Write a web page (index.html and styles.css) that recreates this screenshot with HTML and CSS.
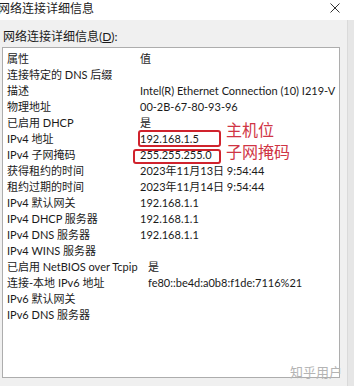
FILE: index.html
```html
<!DOCTYPE html>
<html lang="zh-CN">
<head>
<meta charset="utf-8">
<link rel="stylesheet" href="styles.css">
</head>
<body>
<div class="window">
  <div class="titlebar">
    <span class="title">网络连接详细信息</span>
    <svg class="close" width="10" height="10" viewBox="0 0 10 10"><path d="M0.5 0.5L9.5 9.5M9.5 0.5L0.5 9.5" stroke="#333" stroke-width="1"/></svg>
  </div>
  <div class="content">
    <div class="label">网络连接详细信息(<u>D</u>):</div>
    <div class="listbox">
      <div class="row head"><span class="k">属性</span><span class="v">值</span></div>
      <div class="row"><span class="k">连接特定的 DNS 后缀</span><span class="v"></span></div>
      <div class="row"><span class="k">描述</span><span class="v">Intel(R) Ethernet Connection (10) I219-V</span></div>
      <div class="row"><span class="k">物理地址</span><span class="v">00-2B-67-80-93-96</span></div>
      <div class="row"><span class="k">已启用 DHCP</span><span class="v">是</span></div>
      <div class="row"><span class="k">IPv4 地址</span><span class="v">192.168.1.5</span></div>
      <div class="row"><span class="k">IPv4 子网掩码</span><span class="v">255.255.255.0</span></div>
      <div class="row"><span class="k">获得租约的时间</span><span class="v">2023年11月13日 9:54:44</span></div>
      <div class="row"><span class="k">租约过期的时间</span><span class="v">2023年11月14日 9:54:44</span></div>
      <div class="row"><span class="k">IPv4 默认网关</span><span class="v">192.168.1.1</span></div>
      <div class="row"><span class="k">IPv4 DHCP 服务器</span><span class="v">192.168.1.1</span></div>
      <div class="row"><span class="k">IPv4 DNS 服务器</span><span class="v">192.168.1.1</span></div>
      <div class="row"><span class="k">IPv4 WINS 服务器</span><span class="v"></span></div>
      <div class="row"><span class="k">已启用 NetBIOS over Tcpip</span><span class="v shift">是</span></div>
      <div class="row"><span class="k">连接-本地 IPv6 地址</span><span class="v shift">fe80::be4d:a0b8:f1de:7116%21</span></div>
      <div class="row"><span class="k">IPv6 默认网关</span><span class="v"></span></div>
      <div class="row"><span class="k">IPv6 DNS 服务器</span><span class="v"></span></div>
      <div class="box box1"></div>
      <div class="box box2"></div>
      <div class="note note1">主机位</div>
      <div class="note note2">子网掩码</div>
      <div class="watermark">知乎用户</div>
    </div>
  </div>
  <div class="edge"></div>
</div>
</body>
</html>
```
FILE: styles.css
```css
html, body {
  margin: 0;
  padding: 0;
  width: 354px;
  height: 386px;
  overflow: hidden;
  background: #f0f0f0;
  font-family: Lato, "Noto Sans CJK SC", sans-serif;
  font-size: 11px;
  color: #1a1a1a;
}
.window {
  position: relative;
  width: 354px;
  height: 386px;
}
.titlebar {
  height: 20px;
  background: #fff;
  display: flex;
  align-items: center;
  justify-content: space-between;
  padding: 0 14px 0 0;
}
.title {
  margin-left: -2px;
  font-size: 12px;
  color: #222;
  line-height: 14px;
  margin-top: -3px;
}
.close {
  margin-top: -4px;
}
.content {
  padding: 10px 0 0 2px;
}
.label {
  padding-left: 1px;
  height: 17px;
  line-height: 14px;
  font-size: 12px;
}
.label u {
  text-decoration-thickness: 1px;
}
.listbox {
  position: relative;
  height: 331px;
  background: #fff;
  border: 1px solid #adadad;
  padding-top: 3px;
  box-sizing: border-box;
  width: 338px;
}
.row {
  display: flex;
  height: 16px;
  line-height: 16px;
  white-space: nowrap;
}
.row .k {
  width: 133px;
  padding-left: 4px;
  flex: none;
}
.row .v {
  flex: none;
}
.row .v.shift {
  margin-left: 8px;
}
.box {
  position: absolute;
  border: 2px solid #d0232d;
  border-radius: 3px;
  box-sizing: border-box;
}
.box1 {
  left: 135px;
  top: 82px;
  width: 83px;
  height: 17px;
}
.box2 {
  left: 130px;
  top: 101px;
  width: 88px;
  height: 15px;
}
.note {
  position: absolute;
  color: #d03545;
  font-family: "Noto Sans CJK SC", sans-serif;
  font-size: 16px;
  line-height: 18px;
}
.note1 {
  left: 223px;
  top: 72px;
}
.note2 {
  left: 223px;
  top: 94px;
}
.watermark {
  position: absolute;
  right: -3px;
  bottom: -2px;
  color: #b4b4b4;
  font-family: "Noto Sans CJK SC", sans-serif;
  font-size: 13px;
  line-height: 15px;
}
.edge {
  position: absolute;
  right: 0;
  top: 20px;
  width: 6px;
  height: 366px;
  background: #e6e6e6;
  border-left: 1px solid #dadada;
}
```
